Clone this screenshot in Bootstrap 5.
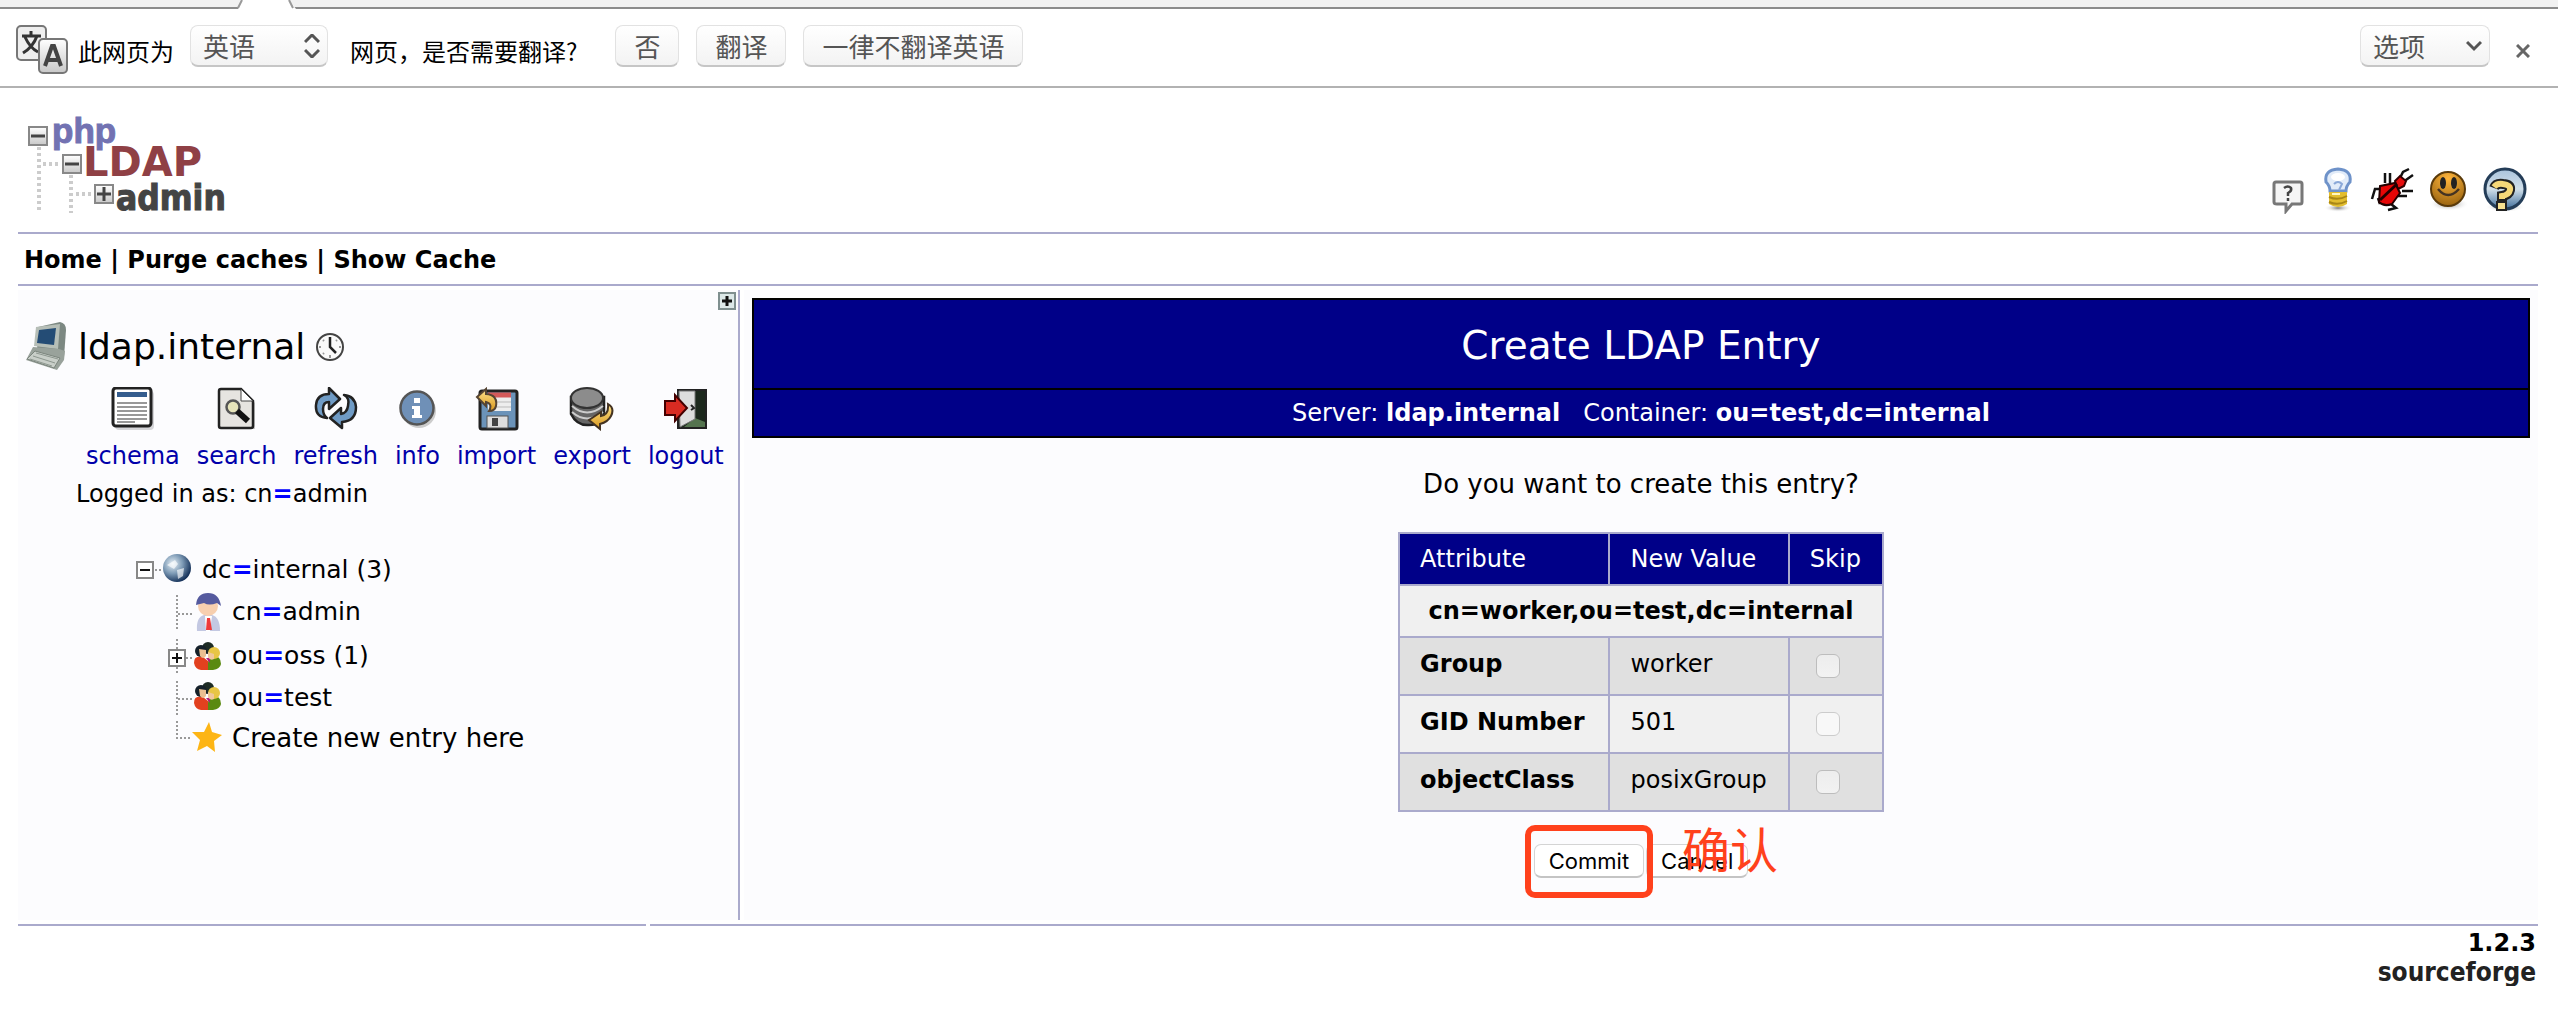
<!DOCTYPE html>
<html lang="en">
<head>
<meta charset="utf-8">
<meta name="viewport" content="width=device-width, initial-scale=1">
<title>phpLDAPadmin - Create LDAP Entry</title>
<link href="https://cdn.jsdelivr.net/npm/bootstrap@5.3.0/dist/css/bootstrap.min.css" rel="stylesheet">
<style>
body{font-family:"DejaVu Sans","Noto Sans CJK SC",sans-serif;font-size:24px;line-height:36px;color:#000;background:#fff}
a{text-decoration:none;color:inherit}
svg{display:block;flex:none}
.tab-strip{height:9px}
.translate-bar{height:79px;border-bottom:2px solid #b2b2b2;padding:16px 16px 0 16px;font-family:"Noto Sans CJK SC",sans-serif}
.bar-text{line-height:36px;margin:8px 0 0 10px;white-space:nowrap}
.lang-tail{margin-left:22px}
.choices{gap:17px;margin-left:38px}
.bar-btn,.bar-select{height:42px;font-size:26px;line-height:36px;color:#555;border:1px solid #e2e2e2;border-bottom:2px solid #c6c6c6;border-radius:8px;background:linear-gradient(#fff,#f3f3f3);padding:0 18px}
.bar-select{appearance:none;padding:0 12px;width:138px}
.opt-select{width:130px}
.select-arrow{position:absolute;right:8px;top:9px;pointer-events:none}
.close-x{margin:19px 12px 0 26px;line-height:0}
.page-body{padding:0 20px 0 18px}
.rule{border-bottom:2px solid #aac}
.masthead{height:146px;padding:16px 10px 0 6px}
.head-icons{gap:12px;padding-top:62px}
.menu-row{height:52px;line-height:52px;padding-left:6px}
.pane{background:#fcfcfe}
.side-pane{width:722px;border-right:2px solid #aac;padding:2px 2px 0 0}
.grow-link{width:18px;margin-left:auto}
.server-row{padding-left:8px;gap:10px;margin-top:12px}
.content-area{min-height:630px;margin-top:4px;gap:4px}
.main-pane{padding:8px 8px 0}
.server-name{font-size:36px;line-height:48px}
.tools{padding-left:68px;gap:17px;margin-top:15px}
.tools a{color:#00a;text-align:center}
.tools svg{margin:0 auto}
.tools span{display:block;margin-top:8px;line-height:34px}
.logged{padding-left:58px;line-height:36px;margin-top:3px}
.eq{color:#00f;font-weight:bold}
.tree{padding-left:118px;margin:38px 0 0;font-size:25px}
.tree li{display:flex;align-items:center;height:40px}
.tree li.tall{height:44px}
.tree .child{padding-left:32px}
.tree a{margin-left:10px}
.tree .create-link{font-size:26px}
.title-box{background:#008;color:#fff;border:2px solid #000;text-align:center}
.title-box h1{font-size:39px;line-height:84px;margin:0;padding-top:4px;border-bottom:2px solid #000;font-weight:400}
.title-box p{margin:0;line-height:46px}
.question{text-align:center;margin:28px 0 30px;font-size:26px}
.entry-table{border-collapse:collapse;margin:0 auto}
.entry-table th,.entry-table td{border:2px solid #aac;padding:0 21px 0 20px;height:52px}
.entry-table th:first-child{padding-right:24px}
.entry-table thead th{background:#008;color:#fff;font-weight:400}
.entry-table tbody td,.entry-table tbody th{height:58px;padding-bottom:4px;background:#e0e0e0}
.entry-table tbody tr.dn th{height:52px;padding:0;background:#f0f0f0;text-align:center}
.entry-table tbody tr.light td,.entry-table tbody tr.light th{background:#f0f0f0}
.skip-box{appearance:none;width:24px;height:24px;border:1px solid #bdbdbd;border-radius:6px;background:linear-gradient(#ededed,#f2f2f2);display:block;margin:4px 8px 0 6px}
.light .skip-box{background:#f8f8f8;border-color:#ccc}
.act{font-family:Inter,sans-serif;font-size:22px;line-height:30px;height:34px;padding:0 14px;border:1px solid #d4d4d4;border-bottom:2px solid #c4c4c4;border-radius:7px;background:#fff;color:#000}
.actions{margin-top:32px;gap:2px}
.mark-frame{position:absolute;left:-9px;top:-19px;right:-9px;bottom:-20px;border:6px solid #ff411c;border-radius:10px;pointer-events:none}
.mark-text{position:absolute;left:36px;top:-27px;font-family:"Noto Sans CJK SC",sans-serif;font-size:48px;line-height:60px;color:#ff411c;white-space:nowrap;pointer-events:none}
.foot-rules{gap:4px;margin-top:4px}
.foot-left{width:628px}
.foot{font-weight:bold;text-align:right;line-height:30px;padding:2px 2px 0}
.sf-logo{font-family:"DejaVu Sans Condensed","DejaVu Sans",sans-serif;font-size:26px;line-height:28px;color:#222;display:block}
</style>
</head>
<body>
<svg width="0" height="0" class="position-absolute" aria-hidden="true">
<defs>
<linearGradient id="gBox" x1="0" y1="0" x2="0" y2="1"><stop offset="0" stop-color="#fff"/><stop offset="1" stop-color="#c8c8c8"/></linearGradient>
<linearGradient id="gGlass" x1="0" y1="0" x2="0" y2="1"><stop offset="0" stop-color="#a9c3dc"/><stop offset=".5" stop-color="#d2e0ea"/><stop offset="1" stop-color="#416f9c"/></linearGradient>
<linearGradient id="gGold" x1="0" y1="0" x2="0" y2="1"><stop offset="0" stop-color="#ffe48d"/><stop offset="1" stop-color="#d8971c"/></linearGradient>
<radialGradient id="gSmile" cx=".5" cy=".2" r=".9"><stop offset="0" stop-color="#ffb53b"/><stop offset="1" stop-color="#8e5a0b"/></radialGradient>
<radialGradient id="gEarth" cx=".35" cy=".35" r=".7"><stop offset="0" stop-color="#e8f1f7"/><stop offset=".5" stop-color="#7d9ab5"/><stop offset="1" stop-color="#102c55"/></radialGradient>
<radialGradient id="gShade"><stop offset="0" stop-color="#777"/><stop offset="1" stop-color="#fff" stop-opacity="0"/></radialGradient>
<g id="people"><circle cx="16" cy="7" r="6" fill="#1d2b24"/><path d="M17 15q12-2 12 8-1 5-8 6h-6z" fill="#5a8a10"/><path d="M2 22q0-8 9-6l5 4v9H9q-6-1-7-7z" fill="#e2401f"/><path d="M14 17l4 0 0 5z" fill="#b0187b"/><circle cx="9" cy="10" r="6" fill="#152029"/><path d="M7 8l7 1v6q-3 4-6 0z" fill="#eabf91"/><circle cx="22" cy="12" r="6" fill="#e8c545"/><path d="M16 11l6 2v5q-4 2-6-2z" fill="#f0c79b"/></g>
</defs>
</svg>

<svg class="tab-strip w-100" height="9" aria-hidden="true"><rect width="100%" height="8" fill="#f1f1f1"/><rect y="7" width="100%" height="2" fill="#8b8b8b"/><path d="M242 0L238 9H296L289 0Z" fill="#fff"/><path d="M242 0L238 8M289 0L293 8" stroke="#999" stroke-width="2"/></svg>

<form class="translate-bar d-flex align-items-start">
  <svg width="52" height="50" viewBox="0 0 52 50" aria-hidden="true"><rect x="1" y="1" width="29" height="34" rx="4" fill="#eee" stroke="#777" stroke-width="2"/><path d="M6 11h19M15 6v5M21 11Q17 22 7 28M9 12q5 11 13 15" stroke="#333" stroke-width="3" fill="none"/><rect x="23" y="14" width="28" height="34" rx="4" fill="url(#gBox)" stroke="#777" stroke-width="2"/><path d="M29 41l7-20h2l7 20M32 35h10" fill="none" stroke="#444" stroke-width="4"/></svg>
  <label class="bar-text" for="pageLang">此网页为</label>
  <div class="position-relative ms-3">
    <select id="pageLang" class="bar-select"><option>英语</option></select>
    <svg class="select-arrow" width="16" height="24" viewBox="0 0 16 24"><path d="M1 8l7-7 7 7M1 16l7 7 7-7" fill="none" stroke="#555" stroke-width="3"/></svg>
  </div>
  <span class="bar-text lang-tail">网页，是否需要翻译?</span>
  <div class="d-flex choices">
    <button type="button" class="bar-btn">否</button>
    <button type="button" class="bar-btn">翻译</button>
    <button type="button" class="bar-btn">一律不翻译英语</button>
  </div>
  <div class="position-relative ms-auto">
    <select class="bar-select opt-select" aria-label="选项"><option>选项</option></select>
    <svg class="select-arrow" width="16" height="24" viewBox="0 0 16 24"><path d="M1 8l7 7 7-7" fill="none" stroke="#555" stroke-width="3"/></svg>
  </div>
  <button type="button" class="close-x border-0 bg-transparent p-0" aria-label="Close"><svg width="14" height="14" viewBox="0 0 14 14"><path d="M1 1l12 12M13 1L1 13" stroke="#666" stroke-width="3"/></svg></button>
</form>

<div class="page-body">
  <header class="masthead rule d-flex justify-content-between">
    <a href="#" aria-label="phpLDAPadmin">
      <svg width="220" height="122" viewBox="24 104 220 122">
        <path d="M39 147v66M71 175v38M43 164h17M76 194h16" stroke="#ccc" stroke-width="4" stroke-dasharray="3 3" fill="none"/>
        <g fill="url(#gBox)" stroke="#888" stroke-width="2"><rect x="29" y="127" width="18" height="18"/><rect x="63" y="155" width="18" height="18"/><rect x="95" y="185" width="18" height="18"/></g>
        <path d="M31 136h14M65 164h14M97 194h14M104 187v14" stroke="#444" stroke-width="3"/>
        <text x="52" y="143" font-family="Liberation Sans" font-weight="bold" font-size="35" fill="#7272b2" stroke="#7272b2">php</text>
        <text x="83" y="176" font-family="DejaVu Sans" font-weight="bold" font-size="40" fill="#8f4045">LDAP</text>
        <text x="116" y="210" font-family="DejaVu Sans Condensed, DejaVu Sans" font-weight="bold" font-size="35" fill="#444" stroke="#444">admin</text>
      </svg>
    </a>
    <nav class="d-flex head-icons" aria-label="Help">
      <a href="#" aria-label="Request feature"><svg width="36" height="48" viewBox="0 0 36 48"><path d="M4 16h24q2 0 2 2v18q0 2-2 2H20l-6 7v-7H5q-3 0-3-2V18q0-2 2-2z" fill="#f5f5f5" stroke="#777" stroke-width="3"/><path d="M12 22q4-3 7 0 1 3-3 5v3M16 32v3" fill="none" stroke="#444" stroke-width="2.500"/></svg></a>
      <a href="#" aria-label="Hints"><svg width="36" height="48" viewBox="0 0 36 48"><ellipse cx="18" cy="42" rx="14" ry="4" fill="url(#gShade)"/><path d="M10 25q0-5-4-9Q4 4 18 3q14 1 12 13-4 4-4 9z" fill="#e2ecf9" stroke="#6e92c9" stroke-width="3"/><ellipse cx="18" cy="11" rx="7" ry="4" fill="#fff"/><path d="M14 18q4-4 8 0l-3 6" fill="none" stroke="#8aa8d8" stroke-width="2"/><path d="M9 26h18v12q-9 6-18 0z" fill="#e2bd2f"/><path d="M9 31q9 4 18-1M9 36q9 4 18-1" fill="none" stroke="#a98716" stroke-width="2"/><path d="M12 28h8" stroke="#fff7c0" stroke-width="2"/></svg></a>
      <a href="#" aria-label="Report bug"><svg width="48" height="48" viewBox="0 0 48 48"><path d="M31 14l4-8 6-3M35 16l10-7M22 17V7M17 17V7M15 23H7l-3 10M34 25h11M30 30h9M23 38l5 4-8 2M10 32l2 6" fill="none" stroke="#111" stroke-width="2.500"/><path d="M27 15l5-5 6 5-2 5-6 3z" fill="#e80d0d" stroke="#300" stroke-width="2"/><path d="M12 20l15-3 5 10-8 11q-8 3-13-2z" fill="#e60606" stroke="#200" stroke-width="2"/><path d="M12 34L29 18" stroke="#200" stroke-width="3"/></svg></a>
      <a href="#" aria-label="Donate"><svg width="42" height="48" viewBox="0 0 42 48"><ellipse cx="21" cy="38" rx="20" ry="7" fill="url(#gShade)"/><circle cx="20" cy="23" r="17" fill="url(#gSmile)" stroke="#5a3a0a" stroke-width="2"/><path d="M10 23q10 12 21 0" fill="none" stroke="#432" stroke-width="2.500"/><ellipse cx="15" cy="17" rx="3" ry="6" fill="#222"/><ellipse cx="26" cy="17" rx="3" ry="6" fill="#222"/></svg></a>
      <a href="#" aria-label="Help"><svg width="46" height="48" viewBox="0 0 46 48"><ellipse cx="23" cy="41" rx="20" ry="5" fill="url(#gShade)"/><circle cx="23" cy="23" r="20" fill="url(#gGlass)" stroke="#243d58" stroke-width="3"/><path d="M12 22q2-5 9-4 8 0 7 6-1 5-8 6v5" fill="none" stroke="#222" stroke-width="10"/><rect x="14" y="35" width="11" height="10" fill="#222"/><path d="M12 21q3-4 9-3 8 1 7 6-1 5-8 6v3" fill="none" stroke="#f6d878" stroke-width="6"/><rect x="16" y="37" width="7" height="6" fill="#f6e090"/></svg></a>
    </nav>
  </header>
  <nav class="menu-row rule fw-bold"><a href="#">Home</a> | <a href="#">Purge caches</a> | <a href="#">Show Cache</a></nav>

  <div class="content-area d-flex">
    <aside class="side-pane pane">
      <a href="#" class="d-block grow-link" aria-label="Expand tree"><svg width="18" height="18"><rect x="1" y="1" width="16" height="16" fill="#dce8e8" stroke="#7f8f8f" stroke-width="2"/><path d="M4 9h10M9 4v10" stroke="#111" stroke-width="3"/></svg></a>
      <div class="d-flex align-items-center server-row">
        <svg width="42" height="50" viewBox="0 0 42 50"><path d="M12 5l22-5q6 1 6 8l-2 27-27-5z" fill="#7c8882"/><path d="M10 5l24-3-2 25-24-3z" fill="#b6beb7"/><path d="M13 8l17-2-2 17-17-2z" fill="#244c75"/><path d="M7 25l26 2 6 2-1 9-7 10L0 38z" fill="#99a29b"/><path d="M1 37l8-8 25 7-6 10z" fill="#c8cec8" stroke="#7b857d"/><path d="M7 34l22 7M10 31l22 6M4 37l22 7" stroke="#8d978f"/></svg>
        <span class="server-name">ldap.internal</span>
        <svg width="30" height="30" viewBox="0 0 30 30"><circle cx="15" cy="15" r="13" fill="#fafafa" stroke="#444" stroke-width="2"/><path d="M15 5v10l6 6" fill="none" stroke="#222" stroke-width="2.500"/><path d="M15 23v3M4 15h2M24 15h2M8 8l1 1M22 8l-1 1M8 22l1-1" stroke="#999" stroke-width="2"/></svg>
      </div>
      <div class="tools d-flex">
        <a href="#"><svg width="44" height="44" viewBox="0 0 44 44"><rect x="4" y="4" width="39" height="39" rx="4" fill="#d5d5d8"/><rect x="2" y="1" width="38" height="38" rx="3" fill="#fff" stroke="#222" stroke-width="3"/><rect x="6" y="5" width="30" height="5" fill="#355d8e"/><path d="M6 16h30M6 20h30M6 24h30M6 28h30M6 32h30M6 35h18" stroke="#777" stroke-width="1.500"/></svg><span>schema</span></a>
        <a href="#"><svg width="44" height="44" viewBox="0 0 44 44"><path d="M5 3h22l13 13v26H5z" fill="#ccc"/><path d="M4 4q0-2 2-2h20l12 12v25q0 2-2 2H6q-2 0-2-2z" fill="#e6e4e0" stroke="#222" stroke-width="2.500"/><path d="M26 2v12h12z" fill="#fff" stroke="#444"/><circle cx="18" cy="20" r="6.500" fill="#e6e4ba" stroke="#555" stroke-width="2.500"/><path d="M22 24l11 10" stroke="#111" stroke-width="6"/></svg><span>search</span></a>
        <a href="#"><svg width="44" height="44" viewBox="0 0 44 44"><g fill="#6f9bc5" stroke="#222" stroke-width="2.500" stroke-linejoin="round"><path d="M2 18Q3 7 15 7V1l11 11-11 10v-7q-6 0-6 7 0 6 4 9Q1 30 2 18z"/><path d="M42 20q-1-11-12-12 6 3 4 11-1 7-7 8v-6L16 31l12 10v-6q14-1 14-15z"/></g></svg><span>refresh</span></a>
        <a href="#"><svg width="44" height="44" viewBox="0 0 44 44"><circle cx="24" cy="24" r="17" fill="#ccc"/><circle cx="22" cy="21" r="16.500" fill="#6f90b7" stroke="#555" stroke-width="2.500"/><path d="M19 11h6v5h-6zM17 19h8v9h2v3H17v-3h2v-6h-2z" fill="#fff"/></svg><span>info</span></a>
        <a href="#"><svg width="44" height="44" viewBox="0 0 44 44"><rect x="5" y="4" width="37" height="38" rx="2" fill="#6b93b9" stroke="#222" stroke-width="3"/><rect x="13" y="6" width="23" height="18" fill="#eee"/><path d="M13 8h23" stroke="#d45a5a" stroke-width="5"/><path d="M14 15h22M14 20h22" stroke="#bbb"/><rect x="12" y="29" width="21" height="12" fill="#ddd" stroke="#555"/><rect x="17" y="31" width="6" height="8" fill="#444"/><path d="M2 10L11 2v5q12 1 10 12-1 5-7 5 4-7-3-9v4z" fill="url(#gGold)" stroke="#543" stroke-width="2"/></svg><span>import</span></a>
        <a href="#"><svg width="46" height="44" viewBox="0 0 46 44"><path d="M2 10v17q6 12 18 11 14 0 15-10V10z" fill="#666" stroke="#222" stroke-width="2.500"/><path d="M3 19q15 13 31 0M3 25q15 13 31 0" fill="none" stroke="#ccc" stroke-width="2"/><ellipse cx="18" cy="11" rx="16" ry="10" fill="#8c8c8c" stroke="#333" stroke-width="2"/><path d="M39 17q7 4 3 12-3 6-11 8v5L20 33l12-8v4q8-1 7-12z" fill="url(#gGold)" stroke="#432" stroke-width="2"/></svg><span>export</span></a>
        <a href="#"><svg width="44" height="44" viewBox="0 0 44 44"><rect x="14" y="3" width="28" height="38" fill="#1c281c" stroke="#222" stroke-width="2"/><path d="M31 31l10 4v5H20z" fill="#55744f"/><path d="M15 4h16v28l-15 8z" fill="#ddd" stroke="#777"/><path d="M27 18l3 3-3 2" fill="none" stroke="#222" stroke-width="2"/><path d="M1 14h10V8l12 13-12 13v-6H1z" fill="#d92b22" stroke="#400" stroke-width="2"/></svg><span>logout</span></a>
      </div>
      <div class="logged">Logged in as: cn<span class="eq">=</span>admin</div>
      <ul class="tree list-unstyled">
        <li><svg width="26" height="26"><path d="M19 13h7" stroke="#999" stroke-width="2" stroke-dasharray="2 2"/><rect x="1" y="5" width="16" height="16" fill="#fff" stroke="#888" stroke-width="2"/><path d="M4 13h10" stroke="#111" stroke-width="2"/></svg><svg width="30" height="34" viewBox="0 0 30 34"><circle cx="15" cy="15" r="14" fill="url(#gEarth)"/><path d="M5 12l8-5 3 4-4 5zM15 17l7-2-1 8-5 3z" fill="#fff" opacity=".65"/></svg><a href="#">dc<span class="eq">=</span>internal (3)</a></li>
        <li class="child tall"><svg width="24" height="34"><path d="M9 0v34M10 19h14" fill="none" stroke="#999" stroke-width="2" stroke-dasharray="2 2"/></svg><svg width="30" height="40" viewBox="0 0 30 40"><path d="M5 39q-1-14 7-16h8q8 2 8 16z" fill="#c3c8e2"/><path d="M13 24h7l-2 15h-4z" fill="#fff"/><path d="M15 26h3l2 12h-6z" fill="#ee3939"/><circle cx="16" cy="14" r="10" fill="#f7cfaf"/><path d="M4 13Q5 1 16 1t13 13l-4-3q-8 3-13 0z" fill="#555a9e"/></svg><a href="#">cn<span class="eq">=</span>admin</a></li>
        <li class="child tall"><svg width="24" height="34"><path d="M9 0v34M18 19h6" fill="none" stroke="#999" stroke-width="2" stroke-dasharray="2 2"/><rect x="1" y="11" width="16" height="16" fill="#fff" stroke="#888" stroke-width="2"/><path d="M4 19h10M9 14v10" stroke="#111" stroke-width="2"/></svg><svg width="30" height="30"><use href="#people"/></svg><a href="#">ou<span class="eq">=</span>oss (1)</a></li>
        <li class="child"><svg width="24" height="34"><path d="M9 0v34M10 18h14" fill="none" stroke="#999" stroke-width="2" stroke-dasharray="2 2"/></svg><svg width="30" height="34"><use href="#people"/></svg><a href="#">ou<span class="eq">=</span>test</a></li>
        <li class="child"><svg width="24" height="34"><path d="M9 0v17h15" fill="none" stroke="#999" stroke-width="2" stroke-dasharray="2 2"/></svg><svg width="30" height="34" viewBox="0 0 30 34"><path d="M17 1l3 10 10 3-8 6 1 11-8-6-10 5 3-11-8-8 12 0z" fill="#fdb515"/></svg><a href="#" class="create-link">Create new entry here</a></li>
      </ul>
    </aside>

    <main class="main-pane pane flex-fill">
      <div class="title-box">
        <h1>Create LDAP Entry</h1>
        <p>Server: <b>ldap.internal</b> &nbsp; Container: <b>ou=test,dc=internal</b></p>
      </div>
      <p class="question">Do you want to create this entry?</p>
      <form>
        <table class="entry-table">
          <thead><tr><th scope="col">Attribute</th><th scope="col">New Value</th><th scope="col">Skip</th></tr></thead>
          <tbody>
            <tr class="dn"><th colspan="3">cn=worker,ou=test,dc=internal</th></tr>
            <tr><th scope="row">Group</th><td>worker</td><td><input type="checkbox" class="skip-box" aria-label="Skip Group"></td></tr>
            <tr class="light"><th scope="row">GID Number</th><td>501</td><td><input type="checkbox" class="skip-box" aria-label="Skip GID Number"></td></tr>
            <tr><th scope="row">objectClass</th><td>posixGroup</td><td><input type="checkbox" class="skip-box" aria-label="Skip objectClass"></td></tr>
          </tbody>
        </table>
        <div class="actions d-flex justify-content-center">
          <div class="position-relative d-flex z-1"><button type="button" class="act">Commit</button><div class="mark-frame"></div></div>
          <div class="position-relative d-flex"><button type="button" class="act">Cancel</button><div class="mark-text">确认</div></div>
        </div>
      </form>
    </main>
  </div>
  <div class="d-flex foot-rules"><div class="rule foot-left"></div><div class="rule flex-fill"></div></div>
  <footer class="foot"><div>1.2.3</div><a href="#" class="sf-logo">sourceforge</a></footer>
</div>
<script src="https://cdn.jsdelivr.net/npm/bootstrap@5.3.0/dist/js/bootstrap.bundle.min.js"></script>
</body>
</html>
